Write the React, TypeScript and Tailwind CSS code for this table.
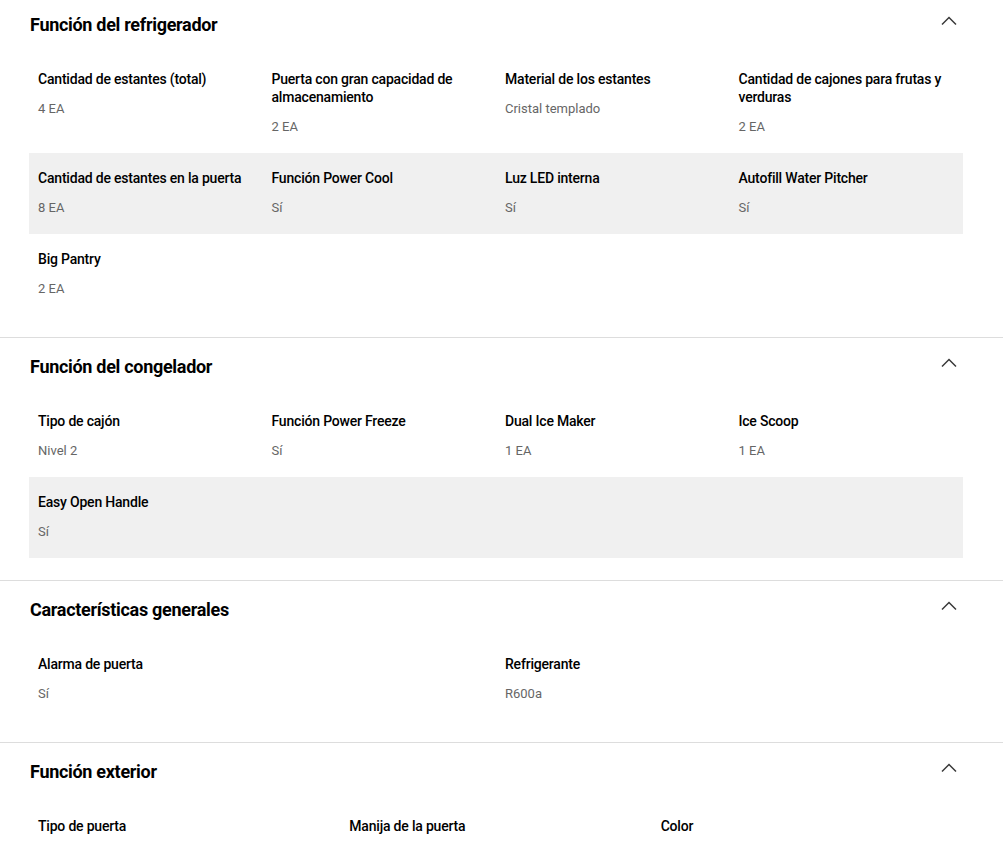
import React from 'react';

type Spec = { label: string; value?: string };

const sections: { title: string; cols: number; rows: Spec[][] }[] = [
  {
    title: 'Función del refrigerador',
    cols: 4,
    rows: [
      [
        { label: 'Cantidad de estantes (total)', value: '4 EA' },
        { label: 'Puerta con gran capacidad de almacenamiento', value: '2 EA' },
        { label: 'Material de los estantes', value: 'Cristal templado' },
        { label: 'Cantidad de cajones para frutas y verduras', value: '2 EA' },
      ],
      [
        { label: 'Cantidad de estantes en la puerta', value: '8 EA' },
        { label: 'Función Power Cool', value: 'Sí' },
        { label: 'Luz LED interna', value: 'Sí' },
        { label: 'Autofill Water Pitcher', value: 'Sí' },
      ],
      [{ label: 'Big Pantry', value: '2 EA' }],
    ],
  },
  {
    title: 'Función del congelador',
    cols: 4,
    rows: [
      [
        { label: 'Tipo de cajón', value: 'Nivel 2' },
        { label: 'Función Power Freeze', value: 'Sí' },
        { label: 'Dual Ice Maker', value: '1 EA' },
        { label: 'Ice Scoop', value: '1 EA' },
      ],
      [{ label: 'Easy Open Handle', value: 'Sí' }],
    ],
  },
  {
    title: 'Características generales',
    cols: 2,
    rows: [
      [
        { label: 'Alarma de puerta', value: 'Sí' },
        { label: 'Refrigerante', value: 'R600a' },
      ],
    ],
  },
  {
    // values fall below the fold
    title: 'Función exterior',
    cols: 3,
    rows: [
      [
        { label: 'Tipo de puerta' },
        { label: 'Manija de la puerta' },
        { label: 'Color' },
      ],
    ],
  },
];

const colClass: Record<number, string> = {
  2: 'grid-cols-2',
  3: 'grid-cols-3',
  4: 'grid-cols-4',
};

function Chevron() {
  return (
    <svg width="16" height="10" viewBox="0 0 16 10" fill="none" className="mt-[-8px]">
      <path d="M1 8.5 L8 1.5 L15 8.5" stroke="#3a3a3a" strokeWidth="1.5" />
    </svg>
  );
}

export default function App() {
  return (
    <div className="bg-white w-[1003px] h-[846px] overflow-hidden text-black" style={{ fontFamily: 'Roboto, "Noto Sans", sans-serif' }}>
      {sections.map((s, i) => (
        <section key={i} className={`${i === 0 ? 'pt-[13px]' : 'pt-[17px] border-t border-[#dddddd]'} pb-[22px]`}>
          <div className="flex items-center justify-between pl-[30px] pr-[46px] h-[24px]">
            <h2 className="text-[18px] font-bold leading-[24px] tracking-[-0.3px]">{s.title}</h2>
            <Chevron />
          </div>
          <div className="mt-[17px] ml-[29px] mr-[40px]">
            {s.rows.map((row, r) => (
              <div key={r} className={`grid ${colClass[s.cols]} ${r % 2 === 1 ? 'bg-[#f0f0f0]' : ''}`}>
                {row.map((c, k) => (
                  <div key={k} className="pl-[9px] pr-[16px] pt-[16px] pb-[17px]">
                    <div className="text-[14px] font-medium leading-[18px] tracking-[-0.2px]">{c.label}</div>
                    {c.value && <div className="mt-[12px] text-[13px] leading-[18px] text-[#666666]">{c.value}</div>}
                  </div>
                ))}
              </div>
            ))}
          </div>
        </section>
      ))}
    </div>
  );
}
